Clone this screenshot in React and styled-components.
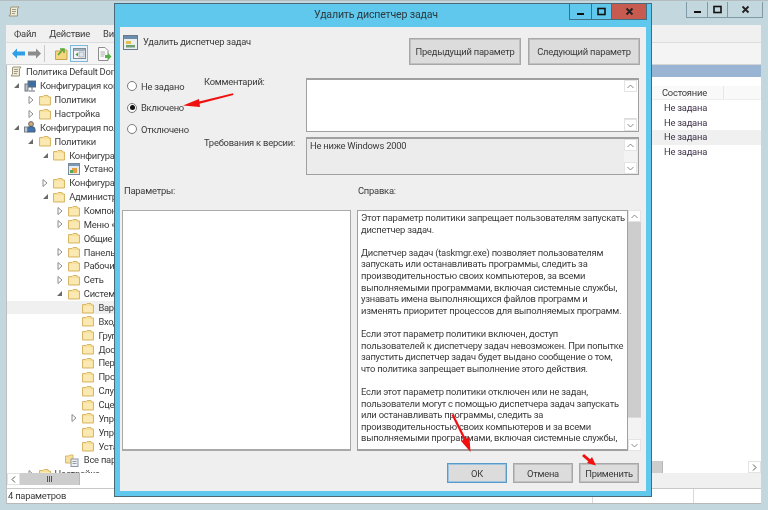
import React from "react";
import styled, { createGlobalStyle } from "styled-components";

const Global = createGlobalStyle`
  html, body { margin: 0; padding: 0; overflow: hidden; }
  body { width: 768px; height: 510px; background: #c3d7de; }
  * { box-sizing: border-box; }
`;

const FONT = `Roboto, "Noto Sans", "Liberation Sans", sans-serif`;

const Desktop = styled.div`
  position: relative;
  width: 768px;
  height: 510px;
  background: #c3d7de;
  box-shadow: inset 0 1px 0 #b4bcbf;
  padding: 0 7px 6px 6px;
  display: flex;
  flex-direction: column;
  font-family: ${FONT};
  font-size: 9.4px;
  letter-spacing: -0.23px;
  color: #3a3a3a;
  overflow: hidden;
  filter: blur(0.3px);
`;

const TitleRow = styled.div`
  height: 25px;
  display: flex;
  align-items: flex-start;
  justify-content: space-between;
  padding: 6px 0 0 2px;
  flex: none;
`;

const Controls = styled.div`
  display: flex;
  height: 16px;
  margin-top: ${(p) => p.$top}px;
  margin-right: ${(p) => p.$right}px;
  border: 1px solid ${(p) => p.$line};
  border-top: 0;
`;

const ControlBtn = styled.div`
  width: ${(p) => p.$w}px;
  display: flex;
  align-items: center;
  justify-content: center;
  background: ${(p) => p.$bg || "transparent"};
  border-left: ${(p) => (p.$first ? "0" : `1px solid ${p.$line}`)};
`;

const MenuBar = styled.div`
  height: 17px;
  flex: none;
  display: flex;
  align-items: center;
  gap: 13px;
  padding-left: 8px;
  background: #f0f0f0;
`;

const Toolbar = styled.div`
  height: 23px;
  flex: none;
  display: flex;
  align-items: center;
  padding-left: 4px;
  background: #f4f4f4;
  border-top: 1px solid #dcdcdc;
  border-bottom: 1px solid #d4d4d4;
`;

const ToolSlot = styled.div`
  width: ${(p) => p.$w || 17}px;
  height: 17px;
  flex: none;
  display: flex;
  align-items: center;
  justify-content: center;
  margin-right: ${(p) => p.$mr || 0}px;
  border: ${(p) => (p.$active ? "1px solid #7db8dc" : "0")};
  background: ${(p) => (p.$active ? "#eaf3f9" : "transparent")};
`;

const ToolSep = styled.div`
  width: 1px;
  height: 17px;
  background: #c9c9c9;
  margin: 0 8px 0 2px;
`;

const Main = styled.div`
  flex: 1;
  min-height: 0;
  display: flex;
  background: #fff;
`;

const TreePane = styled.div`
  width: 300px;
  flex: none;
  display: flex;
  flex-direction: column;
  border-left: 1px solid #bdbdbd;
  padding-bottom: 3px;
`;

const TreeBody = styled.div`
  flex: 1;
  min-height: 0;
  overflow: hidden;
`;

const Row = styled.div`
  height: 13.86px;
  display: flex;
  align-items: center;
  white-space: nowrap;
  padding-left: ${(p) => (p.$level === 0 ? 3 : 4 + 14.6 * (p.$level - 1))}px;
  background: ${(p) => (p.$sel ? "#f0f0f0" : "transparent")};
`;

const ArrowSlot = styled.span`
  width: 10px;
  flex: none;
  margin-right: 3px;
  display: flex;
  justify-content: center;
`;

const RowIcon = styled.span`
  width: 12px;
  height: 12px;
  flex: none;
  display: flex;
  margin-right: 4px;
`;

const HScroll = styled.div`
  height: 12px;
  flex: none;
  display: flex;
  background: #fff;
`;

const HBtn = styled.div`
  width: 13px;
  flex: none;
  display: flex;
  align-items: center;
  justify-content: center;
  border: 1px solid #e3e3e3;
`;

const HThumb = styled.div`
  width: ${(p) => p.$w}px;
  flex: none;
  background: #cdcdcd;
  border-right: 1px solid #b8b8b8;
  display: flex;
  align-items: center;
  justify-content: center;
  gap: 1px;
`;

const Grip = styled.i`
  width: 1px;
  height: 6px;
  background: #555;
`;

const HSpacer = styled.div`
  flex: 1;
`;

const ListPane = styled.div`
  flex: 1;
  display: flex;
  flex-direction: column;
`;

const ListHeading = styled.div`
  height: 12px;
  flex: none;
  background: #9ab5d3;
`;

const ListBody = styled.div`
  flex: 1;
  padding-top: 9px;
`;

const ListHeadRow = styled.div`
  height: 14px;
  display: flex;
  background: #f9f9f9;
  border-bottom: 1px solid #eee;
  margin-bottom: 1px;
  padding-left: 356px;
`;

const StateHead = styled.div`
  width: 62px;
  line-height: 13px;
  border-right: 1px solid #e6e6e6;
`;

const StateRow = styled.div`
  height: 14.6px;
  line-height: 14.6px;
  padding-left: 358px;
  color: #3d3148;
  background: ${(p) => (p.$hi ? "#f0f0f0" : "transparent")};
`;

const ListTabs = styled.div`
  height: 15px;
  flex: none;
  background: #f0f0f0;
`;

const StatusBar = styled.div`
  height: 16px;
  flex: none;
  display: flex;
  background: #fff;
  border-top: 1px solid #c8c8c8;
  border-bottom: 1px solid #b8b8b8;
  border-left: 1px solid #bdbdbd;
  line-height: 14px;
`;

const StatusCell = styled.div`
  width: ${(p) => p.$w}px;
  flex: ${(p) => (p.$grow ? 1 : "none")};
  padding-left: 1px;
  border-right: ${(p) => (p.$grow ? 0 : "1px solid #d8d8d8")};
`;

/* The dialog floats above the console window, as a window on a desktop does */
const Dialog = styled.div`
  position: absolute;
  left: 114px;
  top: 3px;
  width: 538px;
  height: 494px;
  background: #5fc8ec;
  border: 1px solid #4a6a7a;
  padding: 0 5px 5px 5px;
  display: flex;
  flex-direction: column;
`;

const DialogTitle = styled.div`
  height: 23px;
  flex: none;
  position: relative;
  display: flex;
  justify-content: flex-end;
`;

const DialogCaption = styled.div`
  position: absolute;
  left: 0;
  right: 0;
  top: 4px;
  text-align: center;
  font-size: 10.6px;
  letter-spacing: -0.18px;
  padding-right: 14px;
  color: #2c3a40;
`;

const DialogBody = styled.div`
  flex: 1;
  min-height: 0;
  background: #efefef;
  display: flex;
  flex-direction: column;
  padding: 8px 6px 7px 2px;
`;

const HeadRow = styled.div`
  height: 27px;
  flex: none;
  margin-top: 3px;
  display: flex;
  align-items: flex-start;
`;

const HeadIcon = styled.span`
  width: 15px;
  height: 15px;
  flex: none;
  margin: -3px 5px 0 1px;
  display: flex;
`;

const HeadName = styled.div`
  flex: 1;
  margin-top: -2px;
`;

const ActionBtn = styled.div`
  width: ${(p) => p.$w}px;
  height: ${(p) => p.$h}px;
  margin-left: ${(p) => p.$ml}px;
  flex: none;
  background: #dcdcdc;
  border: ${(p) => (p.$primary ? "1px solid #5b9bc9" : "1px solid #a8a8a8")};
  box-shadow: ${(p) => (p.$primary ? "inset 0 0 0 1px #9cc4e0" : "inset 0 0 0 1px #c0c0c0")};
  display: flex;
  align-items: center;
  justify-content: center;
  white-space: nowrap;
`;

const UpperGrid = styled.div`
  flex: none;
  display: grid;
  grid-template-columns: 82px 102px 333px;
  margin-top: 13px;
  height: 107px;
`;

const Radios = styled.div`
  display: flex;
  flex-direction: column;
  gap: 7.5px;
  padding: 1px 0 0 5px;
`;

const RadioRow = styled.div`
  height: 14px;
  display: flex;
  align-items: center;
  gap: 4px;
  white-space: nowrap;
`;

const RadioDot = styled.span`
  width: 10px;
  height: 10px;
  flex: none;
  border-radius: 50%;
  border: 1px solid #7a7a7a;
  background: #fff;
  display: flex;
  align-items: center;
  justify-content: center;
  &::after {
    content: "";
    display: ${(p) => (p.$on ? "block" : "none")};
    width: 5px;
    height: 5px;
    border-radius: 50%;
    background: #111;
  }
`;

const Labels = styled.div`
  display: flex;
  flex-direction: column;
  gap: 48px;
  margin-top: -3px;
  line-height: 13px;
  white-space: nowrap;
`;

const Fields = styled.div`
  display: flex;
  flex-direction: column;
  gap: 5px;
`;

const Field = styled.div`
  height: ${(p) => p.$h}px;
  flex: none;
  display: flex;
  background: ${(p) => (p.$ro ? "#ececec" : "#fff")};
  border: 1px solid #a0a0a0;
  border-width: 2px 1px 1px 1px;
  padding-right: 1px;
`;

const FieldText = styled.div`
  flex: 1;
  padding: 0 0 0 3px;
  line-height: 13px;
`;

const VScroll = styled.div`
  width: 13px;
  flex: none;
  display: flex;
  flex-direction: column;
  background: #f3f3f3;
`;

const VBtn = styled.div`
  height: 12px;
  flex: none;
  background: #fff;
  border: 1px solid #e4e4e4;
  display: flex;
  align-items: center;
  justify-content: center;
`;

const VTrack = styled.div`
  flex: 1;
  min-height: 0;
  display: flex;
  flex-direction: column;
`;

const VThumb = styled.div`
  height: ${(p) => p.$h}px;
  flex: none;
  background: ${(p) => (p.$grey ? "#cdcdcd" : "#fff")};
  border-bottom: 1px solid #dcdcdc;
`;

const LowerHeads = styled.div`
  flex: none;
  display: flex;
  height: 26px;
  margin-top: -1px;
  padding-left: 2px;
`;

const LowerHead = styled.div`
  width: ${(p) => p.$w}px;
  flex: none;
  line-height: 13px;
`;

const LowerRow = styled.div`
  height: 241px;
  flex: none;
  display: flex;
  gap: 6px;
`;

const ParamsBox = styled.div`
  width: 229px;
  flex: none;
  background: #fff;
  border: 1px solid #a9a9a9;
  border-bottom-width: 2px;
`;

const HelpWrap = styled.div`
  width: 284px;
  flex: none;
  display: flex;
`;

const HelpBox = styled.div`
  width: 271px;
  flex: none;
  overflow: hidden;
  background: #fff;
  border: 1px solid #a0a0a0;
  border-bottom-width: 2px;
  padding: 1px 0 0 3px;
  line-height: 11.6px;
  white-space: pre;
`;

const Footer = styled.div`
  flex: none;
  display: flex;
  justify-content: flex-end;
  margin-top: 12px;
  padding-right: 1px;
`;

/* annotation arrows lie over the dialog */
const Overlay = styled.svg`
  position: absolute;
  left: 0;
  top: 0;
  width: 768px;
  height: 510px;
  pointer-events: none;
`;

const Chevron = ({ dir = "up", color = "#8a8a8a" }) => {
  const d = {
    up: "M1.5 6 L4.5 3 L7.5 6",
    down: "M1.5 3 L4.5 6 L7.5 3",
    left: "M6 1.5 L3 4.5 L6 7.5",
    right: "M3 1.5 L6 4.5 L3 7.5",
  }[dir];
  return (
    <svg width="9" height="9" viewBox="0 0 9 9">
      <path d={d} fill="none" stroke={color} strokeWidth="1" />
    </svg>
  );
};

const TreeArrow = ({ open }) =>
  open ? (
    <svg width="7" height="7" viewBox="0 0 7 7">
      <path d="M6 1 V6 H1 Z" fill="#6a6a6a" />
    </svg>
  ) : (
    <svg width="6" height="8" viewBox="0 0 6 8">
      <path d="M1 .5 L5 4 L1 7.5 Z" fill="#fff" stroke="#8a8a8a" />
    </svg>
  );

const Folder = () => (
  <svg width="12" height="12" viewBox="0 0 12 12">
    <path d="M.5 2.5 H4 L5 1.5 H9 L9.5 3 H11.5 V11 H.5 Z" fill="#f7e09a" stroke="#d8b868" />
    <rect x="1.5" y="4" width="9" height="6" fill="#fbe9b4" />
  </svg>
);

const Scroll = () => (
  <svg width="12" height="12" viewBox="0 0 12 12">
    <path d="M3 1 H11 L9.5 3 V10 H1 L2.5 8 V2 Z" fill="#f1ecd8" stroke="#9a9478" />
    <path d="M4 3.5 H8 M4 5.5 H8 M4 7.5 H7" stroke="#8c8672" strokeWidth=".8" />
  </svg>
);

const Computer = () => (
  <svg width="12" height="12" viewBox="0 0 12 12">
    <rect x="4" y="1" width="7.5" height="6" fill="#3a6ea5" stroke="#5a6a7a" />
    <rect x="1" y="4" width="3" height="7" fill="#b9c2cc" stroke="#6a7680" />
    <path d="M5 11 H11 M8 7 V10" stroke="#667" />
  </svg>
);

const User = () => (
  <svg width="12" height="12" viewBox="0 0 12 12">
    <circle cx="7" cy="3" r="2.4" fill="#d8a878" stroke="#6a6a6a" />
    <path d="M3 11 V8 Q3 5.5 7 5.5 Q11 5.5 11 8 V11 Z" fill="#3f74b0" stroke="#4a5a70" />
    <rect x="0.5" y="6" width="3" height="5" fill="#c2c8ce" stroke="#7a8088" />
  </svg>
);

const AppIcon = () => (
  <svg width="12" height="12" viewBox="0 0 12 12">
    <rect x=".5" y=".5" width="11" height="11" fill="#e8ecf0" stroke="#7a8796" />
    <rect x="1" y="1" width="10" height="2" fill="#7a98b8" />
    <rect x="4" y="5" width="5" height="5" fill="#e8a040" />
    <rect x="2" y="7" width="3" height="3" fill="#58a858" />
  </svg>
);

const AllParams = () => (
  <svg width="15" height="13" viewBox="0 0 15 13" style={{ marginLeft: -3 }}>
    <path d="M.5 2 H4 L5 1 H8 V9 H.5 Z" fill="#f7e09a" stroke="#d8b868" />
    <rect x="6" y="5" width="7" height="7.5" fill="#eef1f4" stroke="#8a96a4" />
    <path d="M7.5 7.5 H11.5 M7.5 9.5 H11.5" stroke="#7b8794" strokeWidth=".8" />
  </svg>
);

const ICONS = { folder: Folder, scroll: Scroll, computer: Computer, user: User, app: AppIcon, all: AllParams };

const TREE = [
  [0, null, "scroll", "Политика Default Domain Policy"],
  [1, "open", "computer", "Конфигурация компьютера"],
  [2, "closed", "folder", "Политики"],
  [2, "closed", "folder", "Настройка"],
  [1, "open", "user", "Конфигурация пользователя"],
  [2, "open", "folder", "Политики"],
  [3, "open", "folder", "Конфигурация программ"],
  [4, null, "app", "Установка программ"],
  [3, "closed", "folder", "Конфигурация Windows"],
  [3, "open", "folder", "Административные шаблоны"],
  [4, "closed", "folder", "Компоненты Windows"],
  [4, "closed", "folder", "Меню «Пуск»"],
  [4, null, "folder", "Общие папки"],
  [4, "closed", "folder", "Панель управления"],
  [4, "closed", "folder", "Рабочий стол"],
  [4, "closed", "folder", "Сеть"],
  [4, "open", "folder", "Система"],
  [5, null, "folder", "Варианты действий", true],
  [5, null, "folder", "Вход в систему"],
  [5, null, "folder", "Групповая политика"],
  [5, null, "folder", "Доступ к съёмным"],
  [5, null, "folder", "Перенаправление"],
  [5, null, "folder", "Профили"],
  [5, null, "folder", "Службы"],
  [5, null, "folder", "Сценарии"],
  [5, "closed", "folder", "Управление связью"],
  [5, null, "folder", "Управление питанием"],
  [5, null, "folder", "Установка драйверов"],
  [4, null, "all", "Все параметры"],
  [2, "closed", "folder", "Настройка"],
];

const HELP = `Этот параметр политики запрещает пользователям запускать
диспетчер задач.

Диспетчер задач (taskmgr.exe) позволяет пользователям
запускать или останавливать программы, следить за
производительностью своих компьютеров, за всеми
выполняемыми программами, включая системные службы,
узнавать имена выполняющихся файлов программ и
изменять приоритет процессов для выполняемых программ.

Если этот параметр политики включен, доступ
пользователей к диспетчеру задач невозможен. При попытке
запустить диспетчер задач будет выдано сообщение о том,
что политика запрещает выполнение этого действия.

Если этот параметр политики отключен или не задан,
пользователи могут с помощью диспетчера задач запускать
или останавливать программы, следить за
производительностью своих компьютеров и за всеми
выполняемыми программами, включая системные службы,`;

const MinGlyph = ({ c }) => (
  <svg width="9" height="9" viewBox="0 0 9 9"><rect x="1" y="6" width="7" height="2" fill={c} /></svg>
);
const MaxGlyph = ({ c }) => (
  <svg width="9" height="9" viewBox="0 0 9 9"><rect x="1" y="1.5" width="7" height="6" fill="none" stroke={c} strokeWidth="1.6" /></svg>
);
const CloseGlyph = ({ c }) => (
  <svg width="9" height="9" viewBox="0 0 9 9"><path d="M1.5 1.5 L7.5 7.5 M7.5 1.5 L1.5 7.5" stroke={c} strokeWidth="1.8" /></svg>
);

const WinControls = ({ line, top, right, closeBg, w }) => (
  <Controls $line={line} $top={top} $right={right}>
    <ControlBtn $first $w={w[0]} $line={line}><MinGlyph c="#111" /></ControlBtn>
    <ControlBtn $w={w[1]} $line={line}><MaxGlyph c="#111" /></ControlBtn>
    <ControlBtn $w={w[2]} $line={line} $bg={closeBg}><CloseGlyph c="#222" /></ControlBtn>
  </Controls>
);

const VBar = ({ children }) => (
  <VScroll>
    <VBtn><Chevron dir="up" /></VBtn>
    <VTrack>{children}</VTrack>
    <VBtn><Chevron dir="down" /></VBtn>
  </VScroll>
);

export default function App() {
  return (
    <Desktop>
      <Global />
      <TitleRow>
        <Scroll />
        <WinControls line="#7f9aa5" top={-4} right={-2} w={[20, 20, 35]} />
      </TitleRow>
      <MenuBar>
        <span>Файл</span>
        <span>Действие</span>
        <span>Вид</span>
      </MenuBar>
      <Toolbar>
        <ToolSlot $w={16}>
          <svg width="13" height="11" viewBox="0 0 13 11"><path d="M0 5.5 L5 .5 V3.5 H13 V7.5 H5 V10.5 Z" fill="#2f9fe8" /></svg>
        </ToolSlot>
        <ToolSlot $w={16}>
          <svg width="13" height="11" viewBox="0 0 13 11"><path d="M13 5.5 L8 .5 V3.5 H0 V7.5 H8 V10.5 Z" fill="#8c8c8c" /></svg>
        </ToolSlot>
        <ToolSep />
        <ToolSlot>
          <svg width="13" height="13" viewBox="0 0 13 13"><path d="M.5 4 H5 L6 3 H12 V12.5 H.5 Z" fill="#f3d67e" stroke="#c9a24f" /><path d="M3 8 L8 2.5 M5 2 H9 V6" fill="none" stroke="#5aa83c" strokeWidth="1.6" /></svg>
        </ToolSlot>
        <ToolSlot $active $w={18} $mr={8}>
          <svg width="13" height="11" viewBox="0 0 13 11"><rect x=".5" y=".5" width="12" height="10" fill="#f4f4f4" stroke="#7f8b94" /><rect x="1" y="1" width="11" height="2" fill="#9fb2c2" /><rect x="6" y="4" width="5" height="5" fill="#dfe6ec" stroke="#8b98a4" strokeWidth=".6" /><path d="M5 4.5 L2.5 6.5 L5 8.5 Z" fill="#44a044" /></svg>
        </ToolSlot>
        <ToolSlot>
          <svg width="15" height="14" viewBox="0 0 15 14"><path d="M1.5 .5 H8 L11 3.5 V13.5 H1.5 Z" fill="#fafafa" stroke="#8d8d8d" /><path d="M3.5 5 H8 M3.5 7 H8 M3.5 9 H7" stroke="#9a9a9a" strokeWidth=".8" /><path d="M8 8 H11 V6 L14.5 9.5 L11 13 V11 H8 Z" fill="#57b04a" /></svg>
        </ToolSlot>
      </Toolbar>
      <Main>
        <TreePane>
          <TreeBody>
            {TREE.map(([level, arrow, icon, text, sel], i) => {
              const Icon = ICONS[icon];
              return (
                <Row key={i} $level={level} $sel={sel}>
                  {level > 0 && (
                    <ArrowSlot>{arrow && <TreeArrow open={arrow === "open"} />}</ArrowSlot>
                  )}
                  <RowIcon><Icon /></RowIcon>
                  <span>{text}</span>
                </Row>
              );
            })}
          </TreeBody>
          <HScroll>
            <HBtn><Chevron dir="left" color="#555" /></HBtn>
            <HThumb $w={60}><Grip /><Grip /><Grip /></HThumb>
          </HScroll>
        </TreePane>
        <ListPane>
          <ListHeading />
          <ListBody>
            <ListHeadRow><StateHead>Состояние</StateHead></ListHeadRow>
            <StateRow>Не задана</StateRow>
            <StateRow>Не задана</StateRow>
            <StateRow $hi>Не задана</StateRow>
            <StateRow>Не задана</StateRow>
          </ListBody>
          <HScroll>
            <HThumb $w={357} />
            <HSpacer />
            <HBtn><Chevron dir="right" color="#555" /></HBtn>
          </HScroll>
          <ListTabs />
        </ListPane>
      </Main>
      <StatusBar>
        <StatusCell $w={586}>4 параметров</StatusCell>
        <StatusCell $w={101} />
        <StatusCell $grow />
      </StatusBar>

      <Dialog>
        <DialogTitle>
          <DialogCaption>Удалить диспетчер задач</DialogCaption>
          <WinControls line="#3e6f85" top={0} right={-1} closeBg="#c75b50" w={[21, 20, 35]} />
        </DialogTitle>
        <DialogBody>
          <HeadRow>
            <HeadIcon>
              <svg width="15" height="15" viewBox="0 0 15 15">
                <rect x=".5" y=".5" width="14" height="14" fill="#eceff2" stroke="#6a7a88" />
                <rect x="1" y="1" width="13" height="3" fill="#6b8eae" />
                <rect x="3" y="6" width="5" height="3" fill="#e5c04a" />
                <rect x="3" y="10" width="9" height="2.5" fill="#6f9f72" />
              </svg>
            </HeadIcon>
            <HeadName>Удалить диспетчер задач</HeadName>
            <ActionBtn $w={112} $h={27} $ml={0}>Предыдущий параметр</ActionBtn>
            <ActionBtn $w={112} $h={27} $ml={7}>Следующий параметр</ActionBtn>
          </HeadRow>
          <UpperGrid>
            <Radios>
              <RadioRow><RadioDot />Не задано</RadioRow>
              <RadioRow><RadioDot $on />Включено</RadioRow>
              <RadioRow><RadioDot />Отключено</RadioRow>
            </Radios>
            <Labels>
              <span>Комментарий:</span>
              <span>Требования к версии:</span>
            </Labels>
            <Fields>
              <Field $h={54}>
                <FieldText />
                <VBar><VThumb $h={27} /></VBar>
              </Field>
              <Field $h={38} $ro>
                <FieldText>Не ниже Windows 2000</FieldText>
                <VBar />
              </Field>
            </Fields>
          </UpperGrid>
          <LowerHeads>
            <LowerHead $w={234}>Параметры:</LowerHead>
            <LowerHead $w={200}>Справка:</LowerHead>
          </LowerHeads>
          <LowerRow>
            <ParamsBox />
            <HelpWrap>
              <HelpBox>{HELP}</HelpBox>
              <VBar><VThumb $h={196} $grey /></VBar>
            </HelpWrap>
          </LowerRow>
          <Footer>
            <ActionBtn $w={60} $h={20} $ml={0} $primary>ОК</ActionBtn>
            <ActionBtn $w={60} $h={20} $ml={6}>Отмена</ActionBtn>
            <ActionBtn $w={60} $h={20} $ml={6}>Применить</ActionBtn>
          </Footer>
        </DialogBody>
      </Dialog>

      <Overlay viewBox="0 0 768 510">
        <g fill="#f01010" stroke="none">
          <path d="M233 93.2 L197 102 L197.6 104.2 L233.4 95 Z" />
          <path d="M183 105.5 L199 99 L200 107 Z" />
          <path d="M451.5 415 L453.5 414 L467 441 L465 442 Z" />
          <path d="M470.5 452 L461 441 L469.5 437 Z" />
          <path d="M582 456 L584 454 L591 460 L589 462 Z" />
          <path d="M596 465.5 L587 463 L592 457 Z" />
        </g>
      </Overlay>
    </Desktop>
  );
}
